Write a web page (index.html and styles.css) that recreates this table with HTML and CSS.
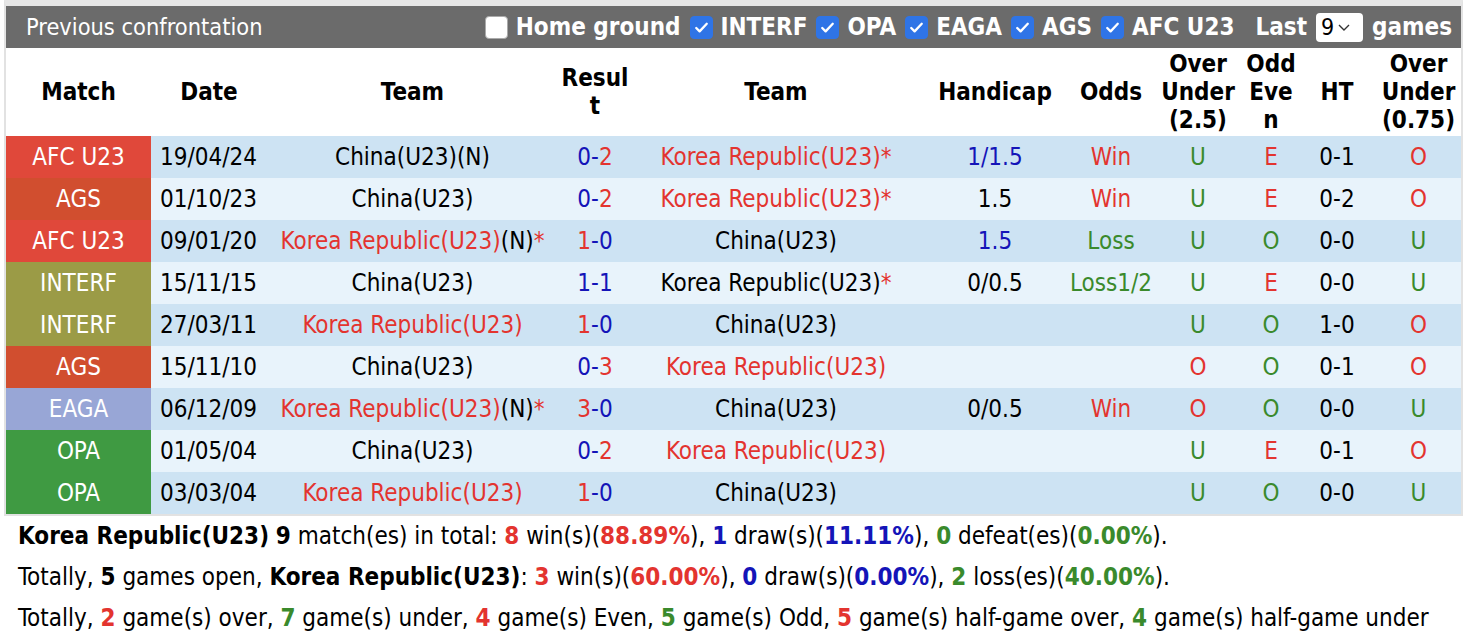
FILE: index.html
```html
<!DOCTYPE html>
<html>
<head>
<meta charset="utf-8">
<link rel="stylesheet" href="styles.css">
</head>
<body>
<div class="wrap">
  <div class="bar">
    <span class="title">Previous confrontation</span>
    <div class="filters">
      <span class="cb"></span><span class="lbl">Home ground</span>
      <span class="cb on"><svg viewBox="0 0 20 20"><path d="M5 10.5l3.2 3.2L15 6.5" fill="none" stroke="#fff" stroke-width="2.2" stroke-linecap="round" stroke-linejoin="round"/></svg></span><span class="lbl">INTERF</span>
      <span class="cb on"><svg viewBox="0 0 20 20"><path d="M5 10.5l3.2 3.2L15 6.5" fill="none" stroke="#fff" stroke-width="2.2" stroke-linecap="round" stroke-linejoin="round"/></svg></span><span class="lbl">OPA</span>
      <span class="cb on"><svg viewBox="0 0 20 20"><path d="M5 10.5l3.2 3.2L15 6.5" fill="none" stroke="#fff" stroke-width="2.2" stroke-linecap="round" stroke-linejoin="round"/></svg></span><span class="lbl">EAGA</span>
      <span class="cb on"><svg viewBox="0 0 20 20"><path d="M5 10.5l3.2 3.2L15 6.5" fill="none" stroke="#fff" stroke-width="2.2" stroke-linecap="round" stroke-linejoin="round"/></svg></span><span class="lbl">AGS</span>
      <span class="cb on"><svg viewBox="0 0 20 20"><path d="M5 10.5l3.2 3.2L15 6.5" fill="none" stroke="#fff" stroke-width="2.2" stroke-linecap="round" stroke-linejoin="round"/></svg></span><span class="lbl">AFC U23</span>
      <span class="lbl last">Last</span>
      <span class="sel">9<svg viewBox="0 0 14 10"><path d="M2 3l5 5 5-5" fill="none" stroke="#333" stroke-width="1.4"/></svg></span>
      <span class="lbl end">games</span>
    </div>
  </div>
  <table class="grid">
    <colgroup>
      <col class="c-match"><col class="c-date"><col class="c-team"><col class="c-res"><col class="c-team2"><col class="c-hc"><col class="c-odds"><col class="c-ou"><col class="c-oe"><col class="c-ht"><col class="c-ou2">
    </colgroup>
    <thead>
      <tr>
        <th>Match</th><th>Date</th><th>Team</th><th>Resul<br>t</th><th>Team</th><th>Handicap</th><th>Odds</th><th>Over<br>Under<br>(2.5)</th><th>Odd<br>Eve<br>n</th><th>HT</th><th>Over<br>Under<br>(0.75)</th>
      </tr>
    </thead>
    <tbody>
      <tr class="d">
        <td class="m afc">AFC U23</td><td class="dt">19/04/24</td><td>China(U23)(N)</td><td><span class="b">0-</span><span class="r">2</span></td><td class="r">Korea Republic(U23)*</td><td class="b">1/1.5</td><td class="r">Win</td><td class="g">U</td><td class="r">E</td><td>0-1</td><td class="r">O</td>
      </tr>
      <tr class="l">
        <td class="m ags">AGS</td><td class="dt">01/10/23</td><td>China(U23)</td><td><span class="b">0-</span><span class="r">2</span></td><td class="r">Korea Republic(U23)*</td><td>1.5</td><td class="r">Win</td><td class="g">U</td><td class="r">E</td><td>0-2</td><td class="r">O</td>
      </tr>
      <tr class="d">
        <td class="m afc">AFC U23</td><td class="dt">09/01/20</td><td><span class="r">Korea Republic(U23)</span>(N)<span class="r">*</span></td><td><span class="r">1</span><span class="b">-0</span></td><td>China(U23)</td><td class="b">1.5</td><td class="g">Loss</td><td class="g">U</td><td class="g">O</td><td>0-0</td><td class="g">U</td>
      </tr>
      <tr class="l">
        <td class="m interf">INTERF</td><td class="dt">15/11/15</td><td>China(U23)</td><td class="b">1-1</td><td>Korea Republic(U23)<span class="r">*</span></td><td>0/0.5</td><td class="g">Loss1/2</td><td class="g">U</td><td class="r">E</td><td>0-0</td><td class="g">U</td>
      </tr>
      <tr class="d">
        <td class="m interf">INTERF</td><td class="dt">27/03/11</td><td class="r">Korea Republic(U23)</td><td><span class="r">1</span><span class="b">-0</span></td><td>China(U23)</td><td></td><td></td><td class="g">U</td><td class="g">O</td><td>1-0</td><td class="r">O</td>
      </tr>
      <tr class="l">
        <td class="m ags">AGS</td><td class="dt">15/11/10</td><td>China(U23)</td><td><span class="b">0-</span><span class="r">3</span></td><td class="r">Korea Republic(U23)</td><td></td><td></td><td class="r">O</td><td class="g">O</td><td>0-1</td><td class="r">O</td>
      </tr>
      <tr class="d">
        <td class="m eaga">EAGA</td><td class="dt">06/12/09</td><td><span class="r">Korea Republic(U23)</span>(N)<span class="r">*</span></td><td><span class="r">3</span><span class="b">-0</span></td><td>China(U23)</td><td>0/0.5</td><td class="r">Win</td><td class="r">O</td><td class="g">O</td><td>0-0</td><td class="g">U</td>
      </tr>
      <tr class="l">
        <td class="m opa">OPA</td><td class="dt">01/05/04</td><td>China(U23)</td><td><span class="b">0-</span><span class="r">2</span></td><td class="r">Korea Republic(U23)</td><td></td><td></td><td class="g">U</td><td class="r">E</td><td>0-1</td><td class="r">O</td>
      </tr>
      <tr class="d">
        <td class="m opa">OPA</td><td class="dt">03/03/04</td><td class="r">Korea Republic(U23)</td><td><span class="r">1</span><span class="b">-0</span></td><td>China(U23)</td><td></td><td></td><td class="g">U</td><td class="g">O</td><td>0-0</td><td class="g">U</td>
      </tr>
    </tbody>
  </table>
</div>
<div class="summary">
  <p><strong>Korea Republic(U23)</strong> <strong>9</strong> match(es) in total: <strong class="r">8</strong> win(s)(<strong class="r">88.89%</strong>), <strong class="b">1</strong> draw(s)(<strong class="b">11.11%</strong>), <strong class="g">0</strong> defeat(es)(<strong class="g">0.00%</strong>).</p>
  <p>Totally, <strong>5</strong> games open, <strong>Korea Republic(U23)</strong>: <strong class="r">3</strong> win(s)(<strong class="r">60.00%</strong>), <strong class="b">0</strong> draw(s)(<strong class="b">0.00%</strong>), <strong class="g">2</strong> loss(es)(<strong class="g">40.00%</strong>).</p>
  <p>Totally, <strong class="r">2</strong> game(s) over, <strong class="g">7</strong> game(s) under, <strong class="r">4</strong> game(s) Even, <strong class="g">5</strong> game(s) Odd, <strong class="r">5</strong> game(s) half-game over, <strong class="g">4</strong> game(s) half-game under</p>
</div>
</body>
</html>
```

FILE: styles.css
```css
* { box-sizing: border-box; }
html, body { margin: 0; padding: 0; background: #fff; }
body {
  font-family: "DejaVu Sans Condensed", "DejaVu Sans", sans-serif;
  color: #000;
  width: 1466px;
}
.wrap {
  margin-left: 4px;
  width: 1459px;
  border: 2px solid #e2e2e2;
  border-top-width: 6px;
  border-top-color: #e6e6e6;
}
.bar {
  height: 42px;
  background: #6b6b6b;
  color: #fff;
  display: flex;
  align-items: center;
  justify-content: space-between;
  padding: 0 9px 0 20px;
}
.title { font-size: 23.4px; }
.filters {
  display: flex;
  align-items: center;
  font-weight: bold;
  font-size: 24px;
}
.cb {
  flex: none;
  width: 23px;
  height: 23px;
  border-radius: 4px;
  background: #fff;
  border: 1px solid #aaa;
  margin-right: 8px;
  display: inline-flex;
  align-items: center;
  justify-content: center;
}
.cb.on { background: #2f74e6; border-color: #2f74e6; }
.cb svg { width: 21px; height: 21px; }
.lbl { margin-right: 9px; white-space: nowrap; }
.lbl.last { margin-left: 12px; }
.lbl.end { margin-right: 0; }
.sel {
  flex: none;
  display: inline-flex;
  align-items: center;
  background: #fff;
  color: #000;
  font-weight: normal;
  border-radius: 4px;
  height: 29px;
  width: 47px;
  padding-left: 5px;
  margin-right: 9px;
  font-size: 23px;
}
.sel svg { width: 14px; height: 10px; margin-left: 3px; }
.grid {
  width: 1455px;
  border-collapse: collapse;
  table-layout: fixed;
  font-size: 24px;
}
.c-match { width: 145px; }
.c-date { width: 116px; }
.c-team { width: 291px; }
.c-res { width: 74px; }
.c-team2 { width: 288px; }
.c-hc { width: 150px; }
.c-odds { width: 82px; }
.c-ou { width: 92px; }
.c-oe { width: 54px; }
.c-ht { width: 78px; }
.c-ou2 { width: 85px; }
.grid th {
  height: 88px;
  background: #fff;
  font-weight: bold;
  font-size: 24px;
  line-height: 28px;
  text-align: center;
  padding: 0;
  white-space: nowrap;
}
.grid td {
  height: 42px;
  padding: 0;
  text-align: center;
  white-space: nowrap;
  line-height: 42px;
}
.grid td.dt { text-align: left; padding-left: 9px; }
tr.d td { background: #cde3f3; }
tr.l td { background: #e8f3fb; }
.grid td.m { color: #fff; }
tr td.afc { background: #e0483a; }
tr td.ags { background: #d14e2f; }
tr td.interf { background: #9b9b46; }
tr td.eaga { background: #98a6d6; }
tr td.opa { background: #3f9a42; }
.r { color: #e3342f; }
.b { color: #1414b8; }
.g { color: #3a8a2c; }
.summary {
  padding-left: 18px;
  font-size: 24px;
  padding-top: 0;
}
.summary p {
  margin: 0;
  line-height: 41px;
  white-space: nowrap;
}
.summary strong { font-weight: bold; }
```
